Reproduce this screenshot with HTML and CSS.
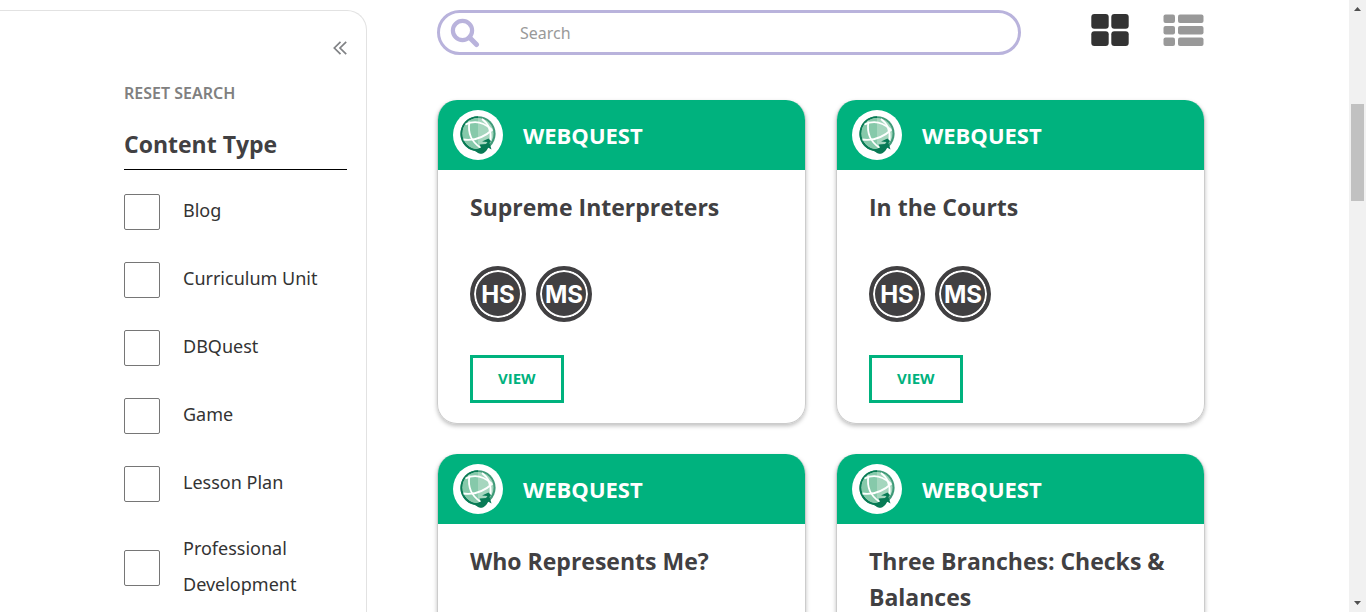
FILE: index.html
```html
<!DOCTYPE html>
<html lang="en">
<head>
<meta charset="utf-8">
<meta name="viewport" content="width=device-width, initial-scale=1">
<title>Search</title>
<link rel="stylesheet" href="styles.css">
</head>
<body>
<svg class="sprite" aria-hidden="true">
  <symbol id="globe" viewBox="0 0 50 50">
    <circle cx="25" cy="25" r="25" fill="#fff"/>
    <circle cx="25" cy="23.800" r="17.600" fill="#3f9a78"/>
    <path d="M25 6.200A17.600 17.600 0 0 0 16 38.900L22 41L26 43.500L30 43.500L34 40L36 34L25 36L10 25L14 12L25 8.500Z" fill="#087a55"/>
    <circle cx="25" cy="23.500" r="15.500" fill="#a5d6be"/>
    <path d="M25 8A15.500 15.500 0 0 0 25 39Z" fill="#86c9aa"/>
    <g fill="none" stroke="#fff" stroke-width="1.800">
      <path d="M12.500 14.500Q26 8 38.500 19.500"/>
      <path d="M16.500 11.500Q13.500 29 28 38"/>
      <path d="M10.500 29.500Q27 31.500 39.500 19.500"/>
      <path d="M29 9Q39 16 37.500 31"/>
    </g>
    <path d="M23 39.500L28 37.500L26.500 34.500L33 34L34.500 32L29 31.500L35.500 28.500L38 31L36.500 33L38.500 39.500L35 37.500L32 42L28 43.800L24 42Z" fill="#087a55"/>
  </symbol>
</svg>
<div class="viewport">
  <div class="page">
    <aside class="sidebar">
      <button class="collapse" type="button" aria-label="Collapse filters">
        <svg width="14" height="14" viewBox="0 0 14 14" fill="none" stroke="#808285" stroke-width="1.700"><path d="M7.500.8L1.300 7L7.500 13.200M13.200.8L7 7L13.200 13.200"/></svg>
      </button>
      <a class="reset" href="#">RESET SEARCH</a>
      <h2 class="filter-title">Content Type</h2>
      <div class="filters">
        <label class="filter"><input type="checkbox"><span>Blog</span></label>
        <label class="filter"><input type="checkbox"><span>Curriculum Unit</span></label>
        <label class="filter"><input type="checkbox"><span>DBQuest</span></label>
        <label class="filter"><input type="checkbox"><span>Game</span></label>
        <label class="filter"><input type="checkbox"><span>Lesson Plan</span></label>
        <label class="filter"><input type="checkbox"><span>Professional Development</span></label>
      </div>
    </aside>
    <main class="results">
      <div class="toolbar">
        <form class="search" role="search">
          <svg width="30" height="30" viewBox="0 0 30 30" fill="none" stroke="#b9b3dc"><circle cx="12.500" cy="12.500" r="9.600" stroke-width="4.200"/><path d="M19.500 19.500L26.500 26.500" stroke-width="5" stroke-linecap="round"/></svg>
          <input type="search" placeholder="Search" aria-label="Search">
        </form>
        <div class="views">
          <button type="button" aria-label="Grid view">
            <svg width="38" height="32" viewBox="0 0 38 32" fill="#333"><rect x="0.300" y="0" width="17.400" height="14.700" rx="3"/><rect x="20.300" y="0" width="17.400" height="14.700" rx="3"/><rect x="0.300" y="17.300" width="17.400" height="14.700" rx="3"/><rect x="20.300" y="17.300" width="17.400" height="14.700" rx="3"/></svg>
          </button>
          <button type="button" aria-label="List view">
            <svg width="41" height="32" viewBox="0 0 41 32" fill="#999"><rect x="0.500" y="0.500" width="11.500" height="8.500" rx="2"/><rect x="15" y="0.500" width="25.500" height="8.500" rx="2"/><rect x="0.500" y="12" width="11.500" height="8.500" rx="2"/><rect x="15" y="12" width="25.500" height="8.500" rx="2"/><rect x="0.500" y="23.500" width="11.500" height="8.500" rx="2"/><rect x="15" y="23.500" width="25.500" height="8.500" rx="2"/></svg>
          </button>
        </div>
      </div>
      <div class="cards">
        <article class="card">
          <header class="card-head"><svg width="50" height="50"><use href="#globe"/></svg><span>WEBQUEST</span></header>
          <div class="card-body">
            <h3>Supreme Interpreters</h3>
            <div class="levels"><span class="level">HS</span><span class="level">MS</span></div>
            <a class="view" href="#">VIEW</a>
          </div>
        </article>
        <article class="card">
          <header class="card-head"><svg width="50" height="50"><use href="#globe"/></svg><span>WEBQUEST</span></header>
          <div class="card-body">
            <h3>In the Courts</h3>
            <div class="levels"><span class="level">HS</span><span class="level">MS</span></div>
            <a class="view" href="#">VIEW</a>
          </div>
        </article>
        <article class="card">
          <header class="card-head"><svg width="50" height="50"><use href="#globe"/></svg><span>WEBQUEST</span></header>
          <div class="card-body">
            <h3>Who Represents Me?</h3>
          </div>
        </article>
        <article class="card">
          <header class="card-head"><svg width="50" height="50"><use href="#globe"/></svg><span>WEBQUEST</span></header>
          <div class="card-body">
            <h3>Three Branches: Checks &amp; Balances</h3>
          </div>
        </article>
      </div>
    </main>
  </div>
  <div class="scrollbar" aria-hidden="true">
    <svg width="17" height="17" viewBox="0 0 17 17" fill="#505050"><path d="M5 11L8.500 7L12 11Z"/></svg>
    <div class="track"><div class="thumb"></div></div>
    <svg width="17" height="17" viewBox="0 0 17 17" fill="#505050"><path d="M5 6L8.500 10L12 6Z"/></svg>
  </div>
</div>
</body>
</html>
```
FILE: styles.css
```css
* {
  box-sizing: border-box;
}

body {
  margin: 0;
  background: #fff;
  color: #333;
  font-family: "Open Sans", "Noto Sans", sans-serif;
}

button {
  padding: 0;
  border: 0;
  background: none;
  cursor: pointer;
}

svg {
  display: block;
  flex: none;
}

a {
  text-decoration: none;
}

.sprite {
  display: none;
}

.viewport {
  display: grid;
  grid-template-columns: minmax(0, 1fr) 17px;
  height: 100vh;
  overflow: hidden;
}

.page {
  display: grid;
  grid-template-columns: 367px minmax(0, 1fr);
  min-height: 0;
  padding-top: 10px;
  overflow: hidden;
}

.sidebar {
  display: flex;
  flex-direction: column;
  padding: 30px 19px 0 124px;
  border: 1px solid #e2e2e2;
  border-width: 1px 1px 0 0;
  border-radius: 0 20px 0 0;
}

.collapse {
  align-self: flex-end;
}

.reset {
  margin-top: 26px;
  color: #808080;
  font-family: "Noto Sans", "Open Sans", sans-serif;
  font-size: 16px;
  font-weight: 600;
  line-height: 24px;
}

.filter-title {
  margin: 20px 0 0;
  padding-bottom: 6px;
  border-bottom: 1px solid #000;
  color: #414042;
  font-size: 23px;
  font-weight: 700;
  line-height: 38px;
}

.filters {
  display: grid;
  gap: 28px;
  margin-top: 20px;
}

.filter {
  display: grid;
  grid-template-columns: 36px minmax(0, 1fr);
  column-gap: 23px;
  align-items: center;
  font-family: "Noto Sans", "Open Sans", sans-serif;
  font-size: 18px;
  line-height: 36px;
}

.filter input {
  width: 36px;
  height: 36px;
  margin: 4px 0 0;
  border: 1px solid #767676;
  border-radius: 2px;
  background: #fff;
  appearance: none;
}

.filter input:checked {
  background: #00b27e;
}

.results {
  padding: 0 144px 0 70px;
}

.toolbar {
  display: flex;
  align-items: center;
  gap: 70px;
}

.search {
  display: flex;
  flex: 1;
  align-items: center;
  gap: 40px;
  height: 45px;
  padding: 0 20px 0 10px;
  border: 3px solid #b9b3dc;
  border-radius: 23px;
}

.search input {
  flex: 1;
  min-width: 0;
  padding: 0;
  border: 0;
  outline: 0;
  background: none;
  font: 16px/24px "Noto Sans", "Open Sans", sans-serif;
}

.search input::placeholder {
  color: #999;
}

.views {
  display: flex;
  gap: 34px;
  padding: 0 1px 5px 0;
}

.cards {
  display: grid;
  grid-template-columns: repeat(2, minmax(0, 1fr));
  grid-auto-rows: 324px;
  gap: 30px;
  margin-top: 45px;
}

.card {
  border: 1px solid #ccc;
  border-top: 0;
  border-radius: 20px;
  box-shadow: 0 2px 4px rgba(0, 0, 0, 0.25);
  overflow: hidden;
}

.card-head {
  display: flex;
  align-items: center;
  gap: 20px;
  height: 70px;
  padding: 0 15px;
  background: #00b27e;
  color: #fff;
  font-size: 22px;
  font-weight: 700;
}

.card-body {
  padding: 19px 32px;
}

.card h3 {
  margin: 0;
  color: #414042;
  font-size: 23px;
  font-weight: 700;
  line-height: 36px;
}

.levels {
  display: flex;
  gap: 10px;
  margin: 41px 0 33px;
}

.level {
  display: grid;
  place-items: center;
  width: 56px;
  height: 56px;
  border: 4px solid #414042;
  border-radius: 50%;
  background: #414042;
  box-shadow: inset 0 0 0 2px #fff;
  color: #fff;
  font-family: Inter, sans-serif;
  font-size: 24px;
  font-weight: 700;
}

.view {
  display: inline-block;
  padding: 8px 25px 10px;
  border: 3px solid #00b27e;
  color: #00b27e;
  font-size: 15px;
  font-weight: 700;
  line-height: 24px;
}

.scrollbar {
  display: flex;
  flex-direction: column;
  background: #f1f1f1;
}

.track {
  flex: 1;
  padding: 87px 2px 0;
}

.thumb {
  height: 97px;
  background: #c1c1c1;
}
```
